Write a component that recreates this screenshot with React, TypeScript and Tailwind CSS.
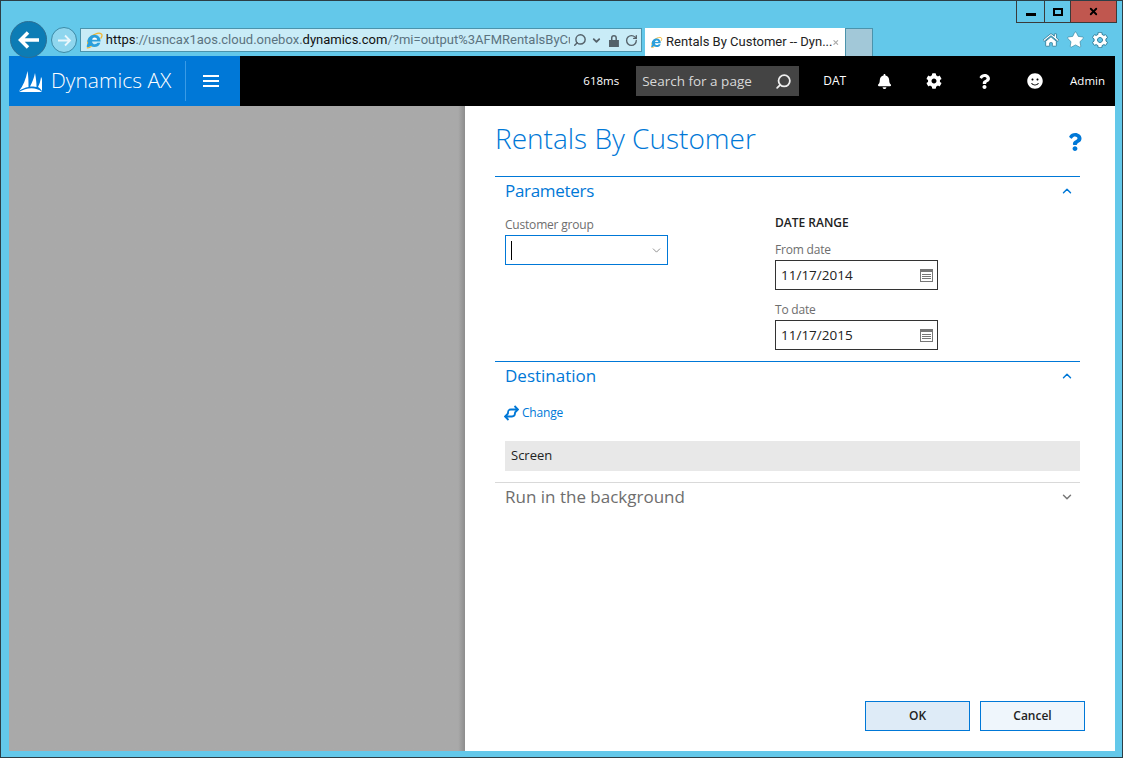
import React from 'react';
import { FaBell, FaCog, FaHome, FaQuestion, FaSmile, FaStar } from 'react-icons/fa';
import { ChevronDown, ChevronUp, RotateCw, Search, X } from 'lucide-react';

const IeLogo = () => (
  <svg width="19" height="19" viewBox="0 0 20 20" fill="none">
    <path d="M3 14.500C2 9 7 4 13 2.500c3-.7 5.500.2 5 2.500-.2 1-.8 2-1.500 3" stroke="#f2b632" strokeWidth="1.400" />
    <path d="M2.500 11c.5-4 3.500-7 7.500-7 4 0 6.500 3 6.500 7H7.500c.2 2 1.500 3 3 3 1.200 0 2.200-.5 2.800-1.500h3C15.500 15.500 13 17 10 17c-1.500 0-2.800-.4-4-1.200-1.500 1.200-3.300 2-4 1.200-.5-.7.200-2.500 1.500-4.500z" fill="#2b9fdc" />
    <path d="M7.600 9.200h5.300C12.700 7.700 11.500 6.800 10.200 6.800c-1.300 0-2.400.9-2.600 2.400z" fill="#fff" />
    <path d="M2 17.500c1 .8 3 .2 5-1.500" stroke="#f2b632" strokeWidth="1.300" />
  </svg>
);

const DynamicsLogo = () => (
  <svg width="25" height="23" viewBox="0 0 25 23" fill="#fff">
    <path d="M1 21C5 16 8 9 9.500 1c1 6 1 11 1 16-3.500.5-6.500 2-9.500 4z" />
    <path d="M12 16.500c2-3.500 4-8.500 5-13.500 1 5 1.500 10 1.500 14-2-.5-4.500-.5-6.500-.5z" />
    <path d="M20 17c1.500-3 2.500-6 3-10 .8 1 1 2 1 3v11c-1-1.500-2.500-3-4-4z" />
    <path d="M1 22c7-4.500 17-5.500 23 0z" />
  </svg>
);

const CalendarIcon = () => (
  <svg width="13" height="13" viewBox="0 0 13 13" fill="none" stroke="#777" strokeWidth="1">
    <rect x="0.500" y="0.500" width="12" height="12" />
    <rect x="0" y="0" width="13" height="3" fill="#777" stroke="none" />
    <path d="M2 5.500h9M2 7.500h9M2 9.500h9" />
  </svg>
);

const ChangeIcon = () => (
  <svg width="15" height="16" viewBox="0 0 15 16" fill="none" stroke="#0078d7" strokeWidth="1.800">
    <path d="M4 8c0-3 1-3.500 3-3.500h7M10.500 1 14 4.500 10.500 8" />
    <path d="M11 8c0 3-1 3.500-3 3.500H1M4.500 8 1 11.500 4.500 15" />
  </svg>
);

const DateField = ({ label, value }: { label: string; value: string }) => (
  <div>
    <div className="text-[12px] leading-[17px] tracking-[-0.2px] text-[#6e6e6e]">{label}</div>
    <div className="mt-[2px] flex h-[30px] w-[163px] items-center justify-between border border-[#333] pl-[5px] pr-[4px] text-[13.500px] text-[#222]">
      <span>{value}</span>
      <CalendarIcon />
    </div>
  </div>
);

const App = () => {
  return (
    <div className="flex h-[758px] w-[1123px] flex-col overflow-hidden border-x border-y border-[#2c3e46] bg-[#63c8ea] font-['Open_Sans',sans-serif]">
      {/* browser chrome */}
      <div className="relative h-[55px] shrink-0">
        <div className="absolute right-[5px] top-0 flex h-[22px] border border-t-0 border-[#3a3a3a]">
          <div className="flex w-[28px] items-end justify-center border-r border-[#3a3a3a] pb-[6px]">
            <div className="h-[3px] w-[10px] bg-black" />
          </div>
          <div className="flex w-[26px] items-center justify-center border-r border-[#3a3a3a]">
            <div className="h-[8px] w-[10px] border-2 border-black" />
          </div>
          <div className="flex w-[45px] items-center justify-center bg-[#c0574f]">
            <X size={11} strokeWidth={4} color="#000" />
          </div>
        </div>

        <div className="flex items-start pl-[9px] pt-[20px]">
          <div className="flex h-[37px] w-[37px] items-center justify-center rounded-full border border-[#2d6f93] bg-[#0c7cb5]">
            <svg width="22" height="18" viewBox="0 0 22 18" fill="none" stroke="#fff" strokeWidth="3.500">
              <path d="M21 9H3M10 1.500 2.500 9l7.500 7.500" />
            </svg>
          </div>
          <div className="ml-[4px] mt-[6px] flex h-[26px] w-[26px] items-center justify-center rounded-full border border-[#3c8aa6] bg-[#8fd6ee]">
            <svg width="15" height="13" viewBox="0 0 15 13" fill="none" stroke="#eaf7fc" strokeWidth="1.800">
              <path d="M1 6.500h12M8 1.500l5 5-5 5" />
            </svg>
          </div>
          <div className="ml-[3px] mt-[7px] flex h-[24px] w-[562px] items-center border border-[#4b93ac] bg-[#c9ecf7] pl-[4px] pr-[3px]">
            <IeLogo />
            <span className="ml-[2px] w-[468px] overflow-hidden whitespace-nowrap font-['Roboto',sans-serif] text-[13px] text-[#5b7380]">
              <span className="text-[#111]">https</span>://usncax1aos.cloud.onebox.<span className="text-[#111]">dynamics.com</span>/?mi=output%3AFMRentalsByCustRepo
            </span>
            <Search size={14} strokeWidth={2.500} color="#55626a" className="ml-[3px] -scale-x-100" />
            <ChevronDown size={11} strokeWidth={4} color="#55626a" className="ml-[4px]" />
            <svg width="12" height="13" viewBox="0 0 12 13" fill="#55626a" className="ml-[6px]">
              <path d="M1 6h10v7H1zM3 6V4a3 3 0 0 1 6 0v2H7.500V4a1.500 1.500 0 0 0-3 0v2z" />
            </svg>
            <RotateCw size={13} strokeWidth={2.500} color="#55626a" className="ml-[5px]" />
          </div>
          <div className="ml-[3px] mt-[7px] flex h-[28px] w-[200px] items-center bg-white pl-[5px] pr-[5px]">
            <IeLogo />
            <span className="ml-[3px] flex-1 whitespace-nowrap font-['Roboto',sans-serif] text-[13px] text-[#222]">Rentals By Customer -- Dyn...</span>
            <X size={11} strokeWidth={3.500} color="#aaa" />
          </div>
          <div className="mt-[7px] h-[28px] w-[28px] border border-b-0 border-[#4b93ac] bg-[#a2c8d8]" />
        </div>

        <div className="absolute right-[14px] top-[30px] flex items-center gap-[8px]">
          <FaHome size={16} color="#fff" stroke="#2b7a96" strokeWidth={30} />
          <FaStar size={17} color="#fff" stroke="#2b7a96" strokeWidth={20} />
          <FaCog size={16} color="#fff" stroke="#2b7a96" strokeWidth={30} />
        </div>
      </div>

      {/* app */}
      <div className="mb-[6px] ml-[8px] mr-[7px] flex min-h-0 flex-1 flex-col">
        <div className="flex h-[50px] shrink-0 items-center bg-black text-white">
          <div className="flex h-full w-[231px] items-center bg-[#0078d7] pl-[9px]">
            <DynamicsLogo />
            <span className="ml-[8px] text-[21px] font-light">Dynamics AX</span>
            <div className="ml-[14px] h-[40px] w-px bg-[#3a9be6]" />
            <div className="ml-[17px] flex flex-col gap-[3px]">
              <div className="h-[2px] w-[16px] bg-white" />
              <div className="h-[2px] w-[16px] bg-white" />
              <div className="h-[2px] w-[16px] bg-white" />
            </div>
          </div>
          <div className="flex flex-1 items-center justify-end pr-[10px]">
            <span className="text-[11.500px]">618ms</span>
            <div className="ml-[17px] flex h-[30px] w-[163px] items-center justify-between bg-[#444] pl-[6px] pr-[7px] text-[#d8d8d8]">
              <span className="text-[13.500px]">Search for a page</span>
              <Search size={17} strokeWidth={2.500} color="#eee" className="-scale-x-100" />
            </div>
            <span className="ml-[24px] text-[12px]">DAT</span>
            <FaBell size={15} className="ml-[31px]" />
            <FaCog size={16} className="ml-[34px]" />
            <FaQuestion size={15} className="ml-[35px]" />
            <FaSmile size={16} className="ml-[35px]" />
            <span className="ml-[27px] text-[11.500px]">Admin</span>
          </div>
        </div>

        <div className="flex min-h-0 flex-1">
          <div className="w-[456px] bg-gradient-to-r from-[#a9a9a9] from-[98.500%] to-[#8d8d8d]" />
          <div className="flex flex-1 flex-col bg-white pb-[20px] pl-[30px] pr-[35px]">
            <div className="flex items-start justify-between">
              <h1 className="mt-[13px] text-[28px] font-light leading-[38px] text-[#0078d7]">Rentals By Customer</h1>
              <FaQuestion size={18} color="#0078d7" className="mr-[-4px] mt-[27px]" />
            </div>

            <section className="mt-[19px] border-t border-[#0078d7] pl-[10px]">
              <div className="flex h-[28px] items-center justify-between pr-[6px]">
                <h2 className="text-[17px] tracking-[-0.3px] text-[#0078d7]">Parameters</h2>
                <ChevronUp size={14} color="#0078d7" strokeWidth={2.500} />
              </div>
              <div className="flex pb-[11px]">
                <div className="mt-[11px] w-[270px]">
                  <div className="text-[12px] leading-[17px] tracking-[-0.2px] text-[#6e6e6e]">Customer group</div>
                  <div className="mt-[2px] flex h-[30px] w-[163px] items-center justify-between border border-[#0078d7] pl-[5px] pr-[4px]">
                    <div className="h-[19px] w-px bg-black" />
                    <ChevronDown size={13} color="#777" strokeWidth={1.500} />
                  </div>
                </div>
                <div className="mt-[9px]">
                  <div className="text-[12px] font-semibold leading-[18px] text-[#222]">DATE RANGE</div>
                  <div className="mt-[9px] flex flex-col gap-[11px]">
                    <DateField label="From date" value="11/17/2014" />
                    <DateField label="To date" value="11/17/2015" />
                  </div>
                </div>
              </div>
            </section>

            <section className="border-t border-[#0078d7] pl-[10px]">
              <div className="flex h-[28px] items-center justify-between pr-[6px]">
                <h2 className="text-[17px] text-[#0078d7]">Destination</h2>
                <ChevronUp size={14} color="#0078d7" strokeWidth={2.500} />
              </div>
              <div className="-ml-[1px] mt-[14px] flex items-center">
                <ChangeIcon />
                <span className="ml-[3px] text-[12px] tracking-[-0.2px] text-[#0078d7]">Change</span>
              </div>
              <div className="mt-[19px] flex h-[30px] items-center bg-[#e8e8e8] pl-[6px] text-[13px] text-[#222]">Screen</div>
            </section>

            <section className="mt-[11px] border-t border-[#d9d9d9] pl-[10px]">
              <div className="flex h-[28px] items-center justify-between pr-[6px]">
                <h2 className="text-[17px] text-[#6e6e6e]">Run in the background</h2>
                <ChevronDown size={14} color="#777" strokeWidth={2.500} />
              </div>
            </section>

            <div className="mr-[-5px] mt-auto flex justify-end gap-[10px]">
              <button className="h-[30px] w-[105px] border border-[#0078d7] bg-[#deebf7] text-[12px] font-semibold text-[#222]">OK</button>
              <button className="h-[30px] w-[105px] border border-[#0078d7] bg-[#eff6fc] text-[12px] font-semibold text-[#222]">Cancel</button>
            </div>
          </div>
        </div>
      </div>
    </div>
  );
};

export default App;
